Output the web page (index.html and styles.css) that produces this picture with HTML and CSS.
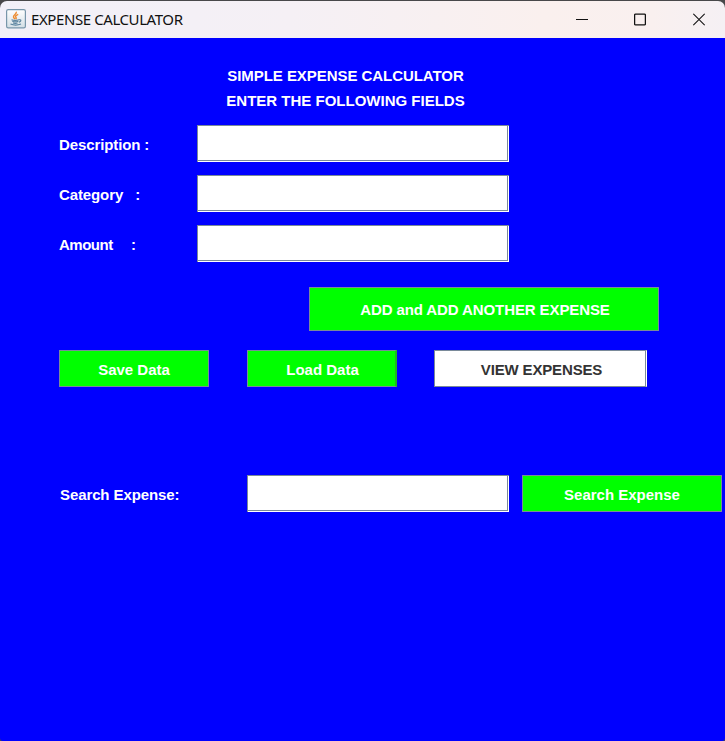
FILE: index.html
```html
<!DOCTYPE html>
<html lang="en">
<head>
<meta charset="utf-8">
<title>EXPENSE CALCULATOR</title>
<link rel="stylesheet" href="styles.css">
</head>
<body>
<div class="window">
  <header class="titlebar">
    <svg class="app-icon" width="20" height="20" viewBox="0 0 20 20">
      <defs><linearGradient id="tile" x1="0" y1="0" x2="0" y2="1"><stop offset="0" stop-color="#fff"/><stop offset="1" stop-color="#d3dee5"/></linearGradient></defs>
      <rect x=".6" y=".6" width="18.8" height="18.2" rx="1.6" fill="url(#tile)" stroke="#7896aa" stroke-width="1.2"/>
      <path d="M10.3 2.8C11 5 7.300 5.800 7.500 7.900C7.600 9 8.600 9.500 9 10.200M12.200 5.300C9.500 6.500 9 7.400 10 8.500C10.500 9.200 10.200 9.800 9.800 10.200" fill="none" stroke="#ed8b2e" stroke-width="1.400"/>
      <path d="M5.500 10.700Q9 12 13 10.700M6.300 12.300Q9.300 13.500 12.300 12.300M7 14Q9.300 14.900 11.600 14M13 10.800Q15.600 10.400 14.600 12.200Q14 13 12.800 13.300" fill="none" stroke="#57809d" stroke-width="1.100"/>
      <path d="M4.500 15Q9.500 17.200 15 15" fill="none" stroke="#57809d" stroke-width="1.200"/>
    </svg>
    <span class="title">EXPENSE CALCULATOR</span>
    <div class="controls">
      <svg width="12" height="14" viewBox="0 0 12 14"><path d="M0 6.500H12" stroke="#111"/></svg>
      <svg width="12" height="14" viewBox="0 0 12 14"><rect x=".6" y="1.100" width="10.800" height="10.800" rx="1" fill="none" stroke="#111" stroke-width="1.300"/></svg>
      <svg class="close" width="12" height="14" viewBox="0 0 12 14"><path d="M.3 .8L11.700 12.200M11.700 .8L.3 12.200" stroke="#111" stroke-width="1.200"/></svg>
    </div>
  </header>
  <main class="content">
    <div class="heading"><span class="h-one">SIMPLE EXPENSE CALCULATOR</span><span class="h-two">ENTER THE FOLLOWING FIELDS</span></div>
    <div class="form">
      <span class="label t-desc">Description :</span><div class="field"></div>
      <span class="label t-cat">Category   :</span><div class="field"></div>
      <span class="label t-amt">Amount     :</span><div class="field"></div>
    </div>
    <div class="button add"><span class="t-add">ADD and ADD ANOTHER EXPENSE</span></div>
    <div class="actions">
      <div class="button"><span class="t-save">Save Data</span></div>
      <div class="button load"><span class="t-load">Load Data</span></div>
      <div class="button view"><span class="t-view">VIEW EXPENSES</span></div>
    </div>
    <div class="search">
      <span class="label t-search">Search Expense:</span>
      <div class="field"></div>
      <div class="button find"><span class="t-find">Search Expense</span></div>
    </div>
  </main>
</div>
</body>
</html>
```
FILE: styles.css
```css
* { box-sizing: border-box; }
body { margin: 0; background: #48484a; }
.window {
  width: 725px;
  height: 741px;
  padding-top: 1px;
  overflow: hidden;
}
.titlebar {
  height: 37px;
  display: flex;
  align-items: center;
  padding: 0 20px 0 6px;
  border-radius: 7px 7px 0 0;
  background: linear-gradient(90deg, #f2f0f8 0%, #f5f0f5 40%, #faf0ee 75%, #f9f0ef 90%, #f5f0f4 100%);
}
.app-icon { margin-bottom: 2px; }
.title {
  margin: 0 0 2px 5px;
  font: 15px/20px "Noto Sans", sans-serif;
  letter-spacing: -0.41px;
  color: #111;
  white-space: nowrap;
}
.controls {
  display: flex;
  gap: 46px;
  margin-left: auto;
}
.controls svg { display: block; }
.controls .close { margin-left: 1px; }
.content {
  height: 703px;
  padding: 25px 0 0 59px;
  background: #00f;
  border-radius: 0 0 3px 3px;
  color: #fff;
  font: bold 15px/25px "Liberation Sans", Arial, sans-serif;
}
.content span { white-space: pre; }
.heading {
  width: 573px;
  display: flex;
  flex-direction: column;
  align-items: center;
}
.h-one { letter-spacing: -0.05px; }
.form {
  display: grid;
  grid-template-columns: 138px 312px;
  row-gap: 13px;
  margin-top: 12px;
}
.label { align-self: center; padding-top: 2px; }
.t-desc, .t-cat { letter-spacing: -0.11px; }
.t-amt { letter-spacing: -0.5px; }
.field {
  height: 37px;
  background: #fff;
  border: 1px solid #7a8a99;
  border-width: 1px 0 0 1px;
  box-shadow: inset -1px -1px #fff, inset -2px -2px #7a8a99;
}
.button {
  height: 37px;
  display: flex;
  align-items: center;
  justify-content: center;
  padding-top: 2px;
  background: #0f0;
  border: 1px solid #7a8a99;
}
.add { width: 350px; height: 44px; padding: 0 0 0 2px; margin: 25px 0 0 250px; }
.t-add { letter-spacing: -0.1px; }
.actions {
  display: grid;
  grid-template-columns: 150px 150px 212px;
  column-gap: 38px;
  margin-top: 19px;
}
.load { border-right: 2px solid #20b820; padding-left: 2px; }
.view {
  margin-left: -1px;
  padding-left: 2px;
  background: #fff;
  color: #333;
  border-right-color: #fff;
  box-shadow: inset -1px 0 #7a8a99;
}
.t-view { letter-spacing: -0.15px; }
.search {
  display: grid;
  grid-template-columns: 188px 262px 200px;
  margin-top: 88px;
}
.find { margin-left: 13px; width: 200px; }
.t-search { padding-left: 1px; letter-spacing: -0.1px; }
```
